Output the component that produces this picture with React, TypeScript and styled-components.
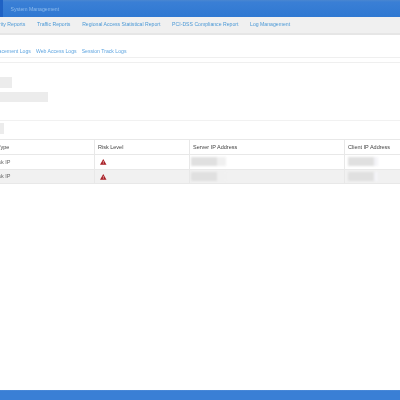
import React from "react";
import styled, { createGlobalStyle } from "styled-components";

const Global = createGlobalStyle`
  html, body { margin: 0; padding: 0; width: 400px; height: 400px; overflow: hidden; background: #fff; }
  #root { height: 400px; }
  * { box-sizing: border-box; }
`;
const Page = styled.div`
  width: 400px; height: 400px; overflow: hidden; display: flex; flex-direction: column;
  font-family: "Liberation Sans", Arial, sans-serif; font-size: 5.15px; background: #fff;
`;
const Header = styled.header`
  height: 17px; flex: none; display: flex; align-items: stretch;
  background: linear-gradient(#4a86d0 0, #3a7fd5 2px, #2f78d2 100%);
`;
const ActiveTab = styled.div`width: 3px; background: #1f62c4;`;
const HeaderItem = styled.span`
  margin-left: 7.5px; align-self: center; color: #8fbcec; filter: blur(0.3px);
`;
const MainNav = styled.nav`
  height: 18px; flex: none; display: flex; align-items: center; gap: 11.7px;
  margin-left: -12.7px; padding-bottom: 2px; background: #f0f0f0; border-bottom: 2px solid #e6e6e6;
  white-space: nowrap;
`;
const NavLink = styled.span`color: #4a98d6; filter: blur(0.3px);`;
const SubNav = styled.div`
  height: 22px; flex: none; display: flex; align-items: flex-end; gap: 5px; margin-left: -12px;
  padding-bottom: 1.5px; white-space: nowrap; line-height: 10px;
`;
const SubLink = styled.span`color: #5fa5e0; filter: blur(0.3px);`;
const Rule = styled.div<{ $top: number }>`
  flex: none; height: 1px; background: #efefef; margin-top: ${(p) => p.$top}px;
`;
const Filters = styled.section`
  flex: none; display: flex; flex-direction: column; gap: 4px; padding-top: 14px;
`;
const Field = styled.div<{ $w: number; $h: number }>`
  width: ${(p) => p.$w}px; height: ${(p) => p.$h}px; background: #ececec;
`;
const Toolbar = styled.div`
  flex: none; margin-top: 18px; padding: 2px 0 5px; border-top: 1px solid #f1f1f1;
`;
const Table = styled.div`
  flex: none; display: grid; grid-template-columns: 95px 95px 155px 55px; grid-auto-rows: min-content;
  border-top: 1px solid #e8e8e8; font-size: 5.5px;
`;
const Cell = styled.div<{ $head?: boolean; $alt?: boolean; $last?: boolean }>`
  height: ${(p) => (p.$head ? 15 : 14.5)}px; display: flex; align-items: center; padding-left: 3px;
  border-bottom: 1px solid #e8e8e8; border-right: ${(p) => (p.$last ? "none" : "1px solid #e8e8e8")};
  white-space: nowrap; overflow: hidden;
  background: ${(p) => (p.$alt ? "#f1f1f1" : "#fff")};
  color: ${(p) => (p.$head ? "#444" : "#666")};
`;
const CellText = styled.span<{ $shift?: number }>`
  filter: blur(0.3px); margin-left: ${(p) => p.$shift ?? 0}px;
`;
const RedactedWrap = styled.span<{ $shift: number }>`
  display: flex; margin-left: ${(p) => p.$shift}px; filter: blur(1px);
`;
const RedactedBlock = styled.span<{ $w: number; $tone: string }>`
  width: ${(p) => p.$w}px; height: 9px; background: ${(p) => p.$tone};
`;
const Spacer = styled.div`flex: 1;`;
const Footer = styled.footer`
  height: 10px; flex: none; background: linear-gradient(#5590da 0, #3a7fd5 1px);
`;
const WarningIcon = styled.svg`margin-left: 2px; margin-top: 1px;`;
const Warning = () => (
  <WarningIcon width="6.5" height="5.8" viewBox="0 0 7 6">
    <path d="M3.5 0 L7 6 H0 Z" fill="#a81f26" />
    <rect x="3.1" y="2" width="0.8" height="2" fill="#e8b8b8" />
    <rect x="3.1" y="4.4" width="0.8" height="0.8" fill="#e8b8b8" />
  </WarningIcon>
);
const navItems = ["Security Reports", "Traffic Reports", "Regional Access Statistical Report", "PCI-DSS Compliance Report", "Log Management"];
const rows = [false, true];

export default function App() {
  return (
    <Page>
      <Global />
      <Header>
        <ActiveTab />
        <HeaderItem>System Management</HeaderItem>
      </Header>
      <MainNav>
        {navItems.map((n) => <NavLink key={n}>{n}</NavLink>)}
      </MainNav>
      <SubNav>
        <SubLink>Replacement Logs</SubLink>
        <SubLink>Web Access Logs</SubLink>
        <SubLink>Session Track Logs</SubLink>
      </SubNav>
      <Rule $top={0} />
      <Rule $top={4} />
      <Filters>
        <Field $w={12} $h={11} />
        <Field $w={48} $h={10} />
      </Filters>
      <Toolbar>
        <Field $w={4} $h={11} />
      </Toolbar>
      <Table>
        <Cell $head><CellText $shift={-23}>Threat Type</CellText></Cell>
        <Cell $head><CellText>Risk Level</CellText></Cell>
        <Cell $head><CellText>Server IP Address</CellText></Cell>
        <Cell $head $last><CellText>Client IP Address</CellText></Cell>
        {rows.map((alt, i) => (
          <React.Fragment key={i}>
            <Cell $alt={alt}><CellText $shift={-10}>Risk IP</CellText></Cell>
            <Cell $alt={alt}><Warning /></Cell>
            <Cell $alt={alt}>
              <RedactedWrap $shift={-2}>
                <RedactedBlock $w={26} $tone="#e0e0e0" />
                <RedactedBlock $w={9} $tone="#f0f0f0" />
              </RedactedWrap>
            </Cell>
            <Cell $alt={alt} $last>
              <RedactedWrap $shift={0}>
                <RedactedBlock $w={26} $tone="#e0e0e0" />
                <RedactedBlock $w={4} $tone="#f4f4f8" />
              </RedactedWrap>
            </Cell>
          </React.Fragment>
        ))}
      </Table>
      <Spacer />
      <Footer />
    </Page>
  );
}
